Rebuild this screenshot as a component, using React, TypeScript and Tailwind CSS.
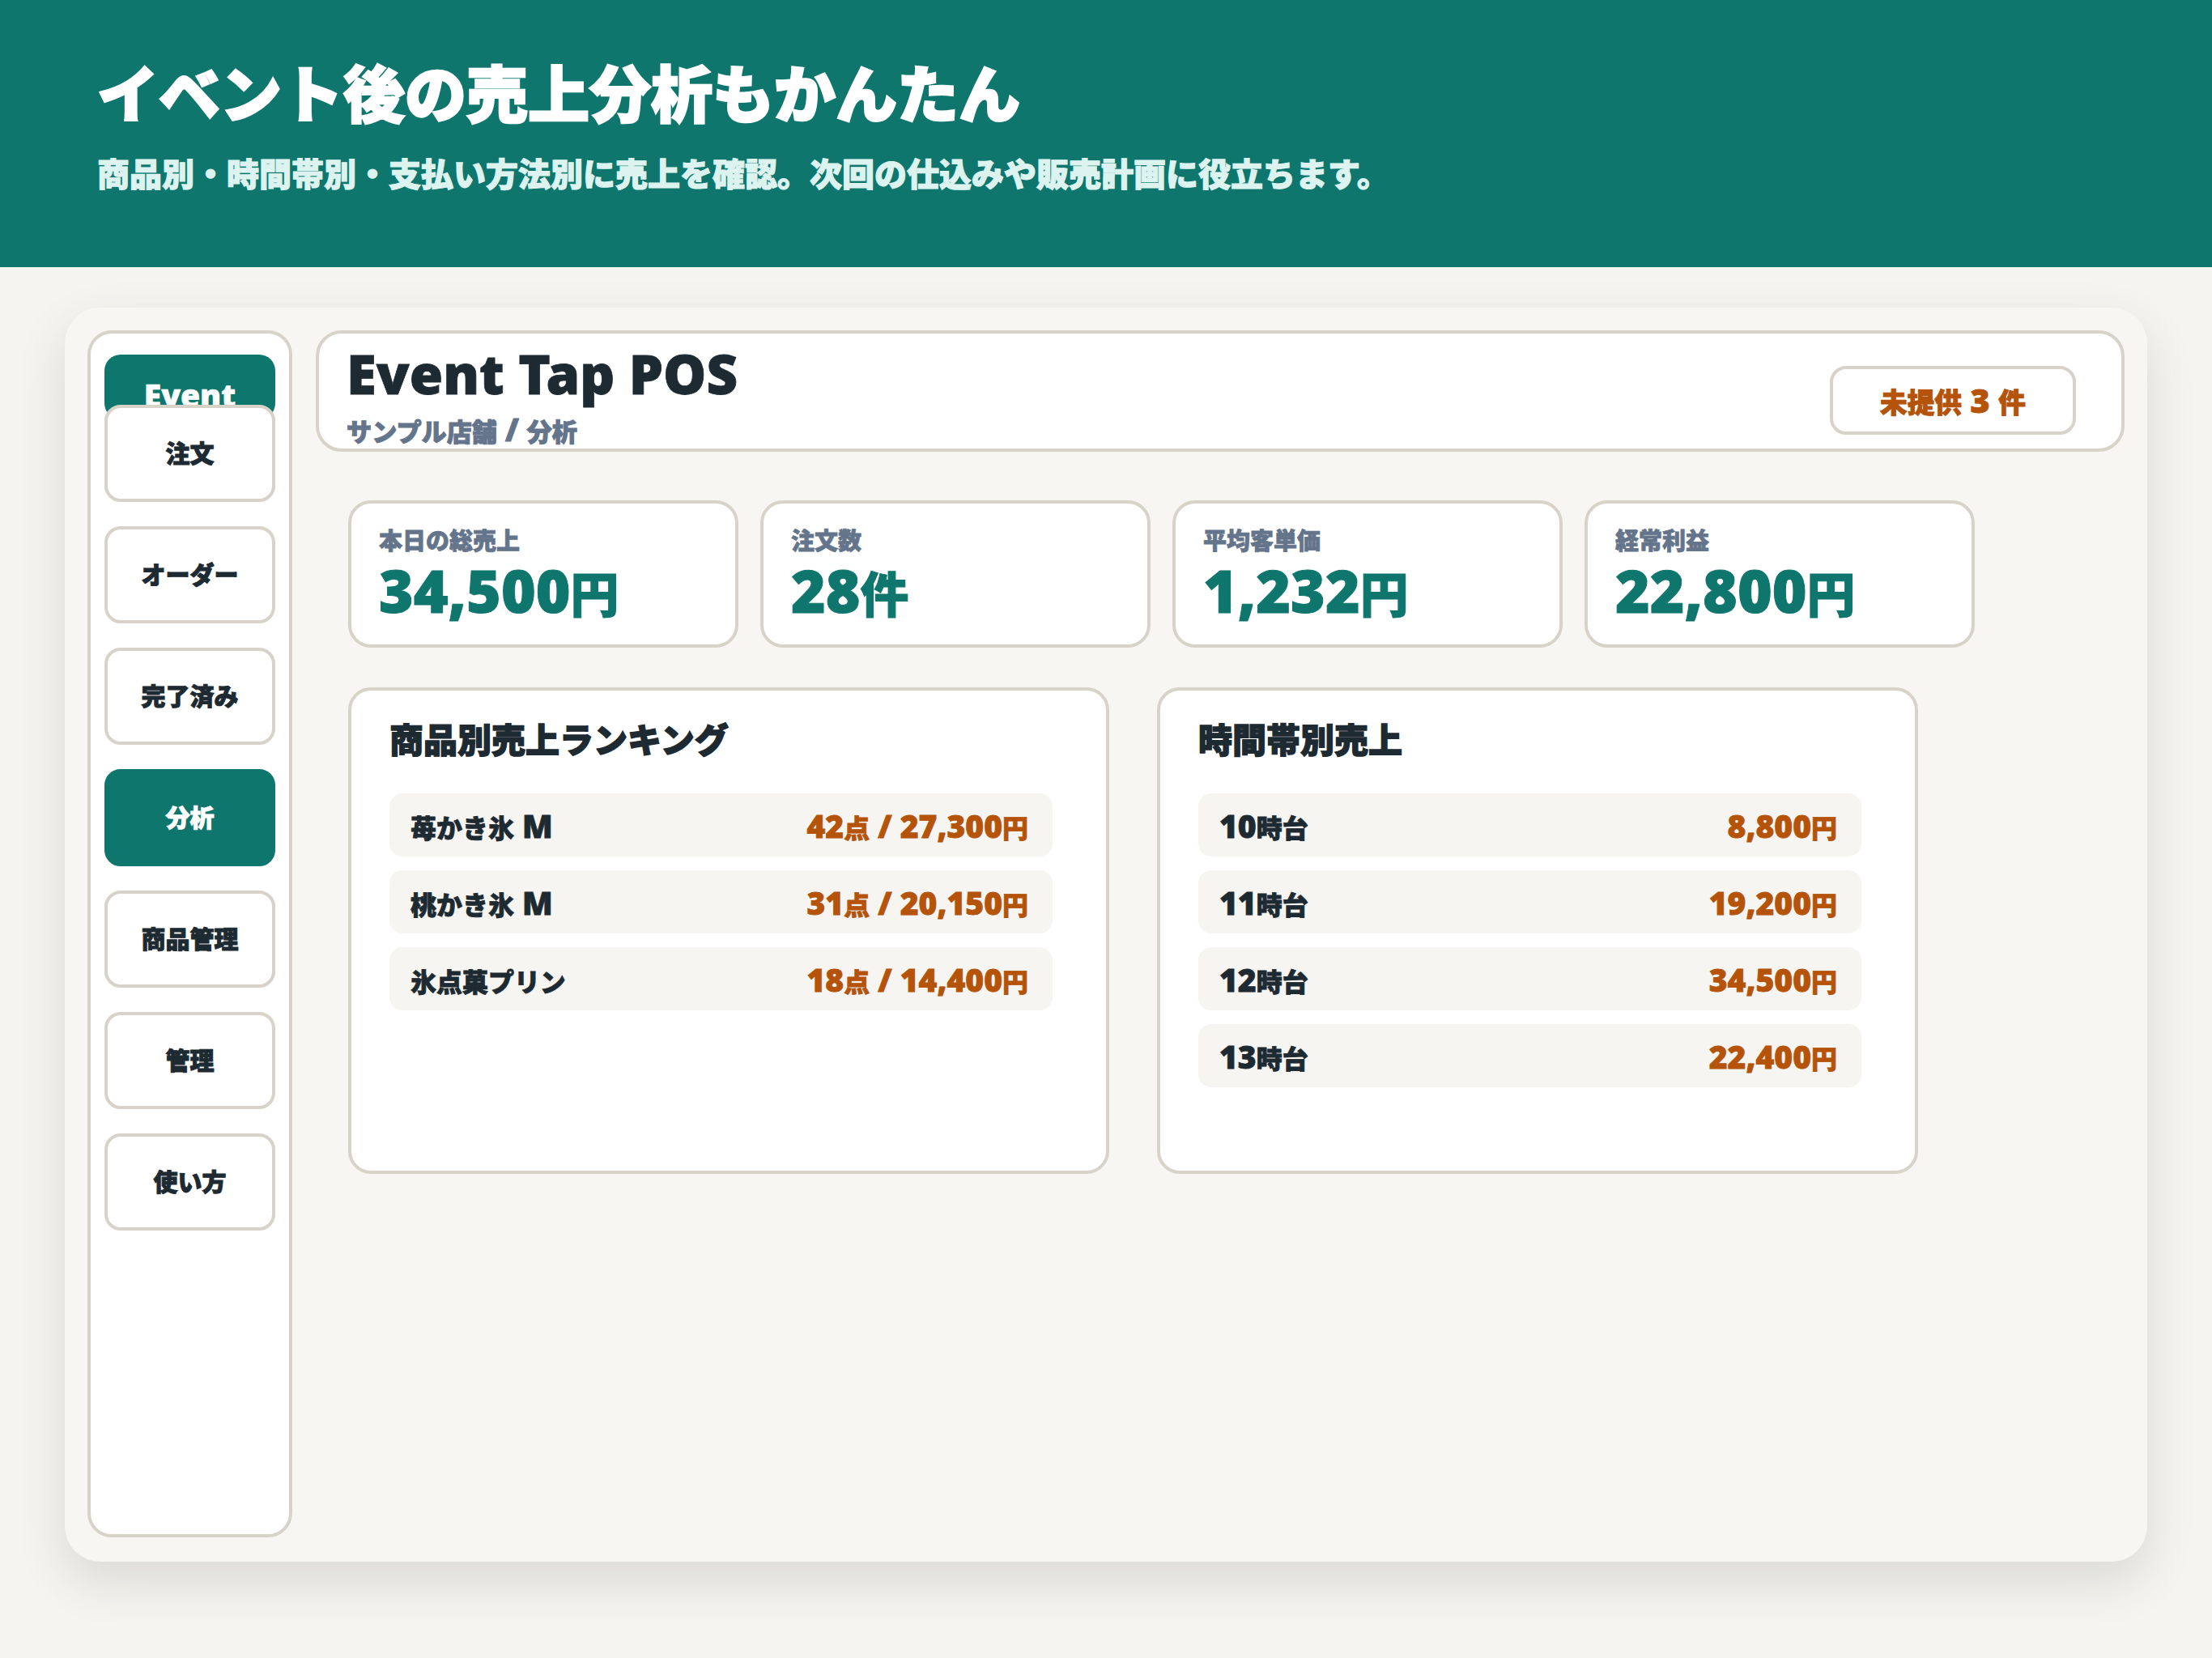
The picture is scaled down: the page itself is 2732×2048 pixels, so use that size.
import { Fragment } from "react";

const CJK_RUN = /([\u3000-\u30ff\u3400-\u9fff\uff00-\uffef]+)/;

// CJK glyphs sit a little smaller than the latin digits in mixed strings
const Mixed = ({ text }: { text: string }) => (
  <>
    {text.split(CJK_RUN).map((part, i) =>
      i % 2 === 1 ? (
        <span key={i} className="text-[0.82em]">
          {part}
        </span>
      ) : (
        <Fragment key={i}>{part}</Fragment>
      )
    )}
  </>
);

const navItems = [
  { label: "注文", active: false },
  { label: "オーダー", active: false },
  { label: "完了済み", active: false },
  { label: "分析", active: true },
  { label: "商品管理", active: false },
  { label: "管理", active: false },
  { label: "使い方", active: false },
];

const stats = [
  { label: "本日の総売上", value: "34,500円" },
  { label: "注文数", value: "28件" },
  { label: "平均客単価", value: "1,232円" },
  { label: "経常利益", value: "22,800円" },
];

const ranking = [
  { name: "苺かき氷 M", value: "42点 / 27,300円" },
  { name: "桃かき氷 M", value: "31点 / 20,150円" },
  { name: "氷点菓プリン", value: "18点 / 14,400円" },
];

const hourly = [
  { name: "10時台", value: "8,800円" },
  { name: "11時台", value: "19,200円" },
  { name: "12時台", value: "34,500円" },
  { name: "13時台", value: "22,400円" },
];

interface Row {
  name: string;
  value: string;
}

const Panel = ({ title, rows }: { title: string; rows: Row[] }) => (
  <section className="h-[601px] w-[940px] rounded-[28px] border-4 border-[#d8d3c9] bg-white pl-[47px] pt-[40px]">
    <h2 className="text-[42px] leading-none [-webkit-text-stroke-width:1.4px]">{title}</h2>
    <div className="mt-[45px] flex w-[819px] flex-col gap-[17px]">
      {rows.map((row) => (
        <div
          key={row.name}
          className="flex h-[78px] items-center justify-between rounded-[16px] bg-[#f6f5f1] pl-[26px] pr-[30px] text-[39px] leading-none [-webkit-text-stroke-width:0.8px]"
        >
          <span>
            <Mixed text={row.name} />
          </span>
          <span className="text-[#b45309]">
            <Mixed text={row.value} />
          </span>
        </div>
      ))}
    </div>
  </section>
);

export default function App() {
  return (
    <div className="min-h-[2048px] w-full bg-[#f5f4f0] font-['Noto_Sans','Noto_Sans_CJK_JP',sans-serif] font-black text-[#1d2a32]">
      <header className="h-[330px] bg-[#0f766e] pl-[120px] pt-[78px]">
        <h1 className="text-[76px] leading-none text-white [-webkit-text-stroke-width:2.5px]">
          イベント後の売上分析もかんたん
        </h1>
        <p className="mt-[41px] text-[40px] leading-none text-[#dcf3ef] [-webkit-text-stroke-width:1.2px]">
          商品別・時間帯別・支払い方法別に売上を確認。次回の仕込みや販売計画に役立ちます。
        </p>
      </header>

      <div className="px-[80px] pt-[50px]">
        <div className="flex h-[1549px] gap-[29px] rounded-[44px] bg-[#f7f6f2] px-[28px] pb-[30px] pt-[28px] shadow-[0_24px_60px_rgba(60,55,40,0.14)]">
          <aside className="flex w-[253px] shrink-0 flex-col rounded-[30px] border-4 border-[#d8d3c9] bg-white px-[17px] pt-[26px]">
            <div className="h-[80px] overflow-hidden rounded-[20px] bg-[#0f766e] pt-[30px] text-center text-[39px] leading-none text-white [-webkit-text-stroke-width:0.6px]">
              Event
            </div>
            <nav className="relative -mt-[18px] flex flex-col gap-[30px]">
              {navItems.map((item) => (
                <button
                  key={item.label}
                  className={
                    item.active
                      ? "flex h-[120px] items-center justify-center rounded-[20px] border-4 border-[#0f766e] bg-[#0f766e] text-[30px] leading-none text-white [-webkit-text-stroke-width:1px]"
                      : "flex h-[120px] items-center justify-center rounded-[20px] border-4 border-[#d8d3c9] bg-white text-[30px] leading-none text-[#1d2a32] [-webkit-text-stroke-width:1px]"
                  }
                >
                  {item.label}
                </button>
              ))}
            </nav>
          </aside>

          <main className="min-w-0 flex-1">
            <div className="flex h-[150px] items-start justify-between rounded-[32px] border-4 border-[#d8d3c9] bg-white pl-[34px] pr-[56px]">
              <div className="pt-[16px]">
                <h1 className="text-[67px] leading-none [-webkit-text-stroke-width:0.8px]">Event Tap POS</h1>
                <p className="mt-[16px] text-[38px] leading-none text-[#64748b] [-webkit-text-stroke-width:1px]">
                  <Mixed text="サンプル店舗 / 分析" />
                </p>
              </div>
              <div className="mt-[40px] flex h-[85px] w-[304px] items-center justify-center rounded-[20px] border-4 border-[#d8d3c9] bg-white text-[41px] leading-none text-[#b45309] [-webkit-text-stroke-width:1px]">
                <span>
                  <Mixed text="未提供 3 件" />
                </span>
              </div>
            </div>

            <div className="pl-[40px] pt-[60px]">
              <div className="grid grid-cols-[repeat(4,482px)] gap-[27px]">
                {stats.map((s) => (
                  <div
                    key={s.label}
                    className="h-[182px] rounded-[28px] border-4 border-[#d8d3c9] bg-white pl-[34px] pt-[31px]"
                  >
                    <div className="text-[29px] leading-none text-[#64748b] [-webkit-text-stroke-width:0.8px]">
                      {s.label}
                    </div>
                    <div className="mt-[10px] text-[73px] leading-none text-[#0f766e] [-webkit-text-stroke-width:1px]">
                      <Mixed text={s.value} />
                    </div>
                  </div>
                ))}
              </div>

              <div className="mt-[49px] flex gap-[59px]">
                <Panel title="商品別売上ランキング" rows={ranking} />
                <Panel title="時間帯別売上" rows={hourly} />
              </div>
            </div>
          </main>
        </div>
      </div>
    </div>
  );
}
